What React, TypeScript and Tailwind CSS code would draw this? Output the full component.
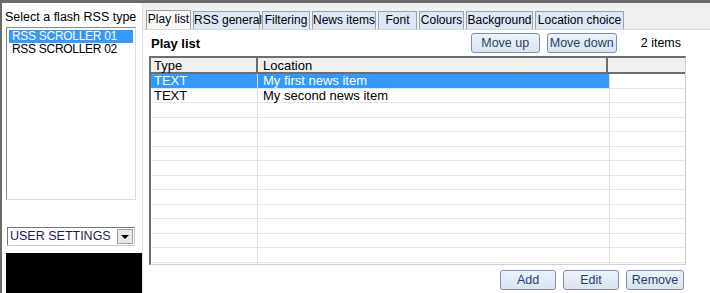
import React from "react";

const tabs = [
  { label: "Play list", w: "w-[45px]" },
  { label: "RSS general", w: "w-[67px]" },
  { label: "Filtering", w: "w-[48px]" },
  { label: "News items", w: "w-[64px]" },
  { label: "Font", w: "w-[39px]" },
  { label: "Colours", w: "w-[45px]" },
  { label: "Background", w: "w-[67px]" },
  { label: "Location choice", w: "w-[89px]" },
];

const rows = [
  { type: "TEXT", location: "My first news item" },
  { type: "TEXT", location: "My second news item" },
];

const WinButton = ({ label, className }: { label: string; className: string }) => (
  <button
    className={`h-[20px] rounded-[3px] border border-[#7d8fad] bg-gradient-to-b from-[#eef3fa] to-[#d9e4f2] text-[12.5px] text-[#27406b] whitespace-nowrap ${className}`}
  >
    {label}
  </button>
);

export default function App() {
  return (
    <div
      className="flex w-[710px] h-[293px] overflow-hidden bg-white border-t-[3px] border-l-2 border-[#6b6b6b] text-[12px] text-black"
      style={{ fontFamily: '"Liberation Sans", Arial, sans-serif' }}
    >
      {/* left column */}
      <div className="flex flex-col w-[141px] shrink-0 border-r border-[#e0e0e0]">
        <div className="pl-[3px] pt-[7px] h-[24px] leading-[14px] text-[12.5px] whitespace-nowrap">Select a flash RSS type</div>
        <div className="ml-[4px] w-[130px] h-[173px] border border-[#8a8a8a] border-r-[#dcdcdc] border-b-[#dcdcdc] p-[2px]">
          <div className="h-[13px] leading-[13px] bg-[#3399ff] text-white pl-[3px] text-[12px] tracking-[-0.3px]">RSS SCROLLER 01</div>
          <div className="h-[13px] leading-[13px] pl-[3px] text-[12px] tracking-[-0.3px]">RSS SCROLLER 02</div>
        </div>
        <div className="mt-[27px] ml-[5px] w-[128px] h-[19px] flex border border-[#7a7a7a] border-r-[#c8c8c8] border-b-[#c8c8c8]">
          <div className="flex-1 pl-[2px] leading-[17px] text-[#1a1a5a] text-[12.5px] whitespace-nowrap">USER SETTINGS</div>
          <div className="w-[16px] h-[15px] mt-[1px] mr-[1px] bg-[#e8e8e8] border border-[#a0a0a0] flex items-center justify-center">
            <div className="w-0 h-0 border-l-[4px] border-r-[4px] border-t-[4px] border-l-transparent border-r-transparent border-t-black" />
          </div>
        </div>
        <div className="mt-[7px] ml-[4px] flex-1 bg-black" />
      </div>

      {/* right column */}
      <div className="flex flex-col flex-1">
        <div className="h-[27px] bg-[#f0f0f0] flex items-end pl-[3px] gap-[2px] border-b border-[#d8d8d8]">
          {tabs.map((t, i) => (
            <div
              key={t.label}
              className={
                i === 0
                  ? `${t.w} shrink-0 h-[19px] text-center whitespace-nowrap leading-[17px] bg-[#f7f7f7] border border-b-0 border-[#a0a0a0] text-[12px]`
                  : `${t.w} shrink-0 h-[18px] text-center whitespace-nowrap leading-[16px] bg-[#dce7f5] border border-b-0 border-[#9aa4b0] text-[12px]`
              }
            >
              {t.label}
            </div>
          ))}
        </div>

        <div className="flex items-center h-[26px] pl-[8px] pr-[29px]">
          <div className="font-bold text-[13px] flex-1 pt-[2px]">Play list</div>
          <WinButton label="Move up" className="w-[69px]" />
          <WinButton label="Move down" className="w-[70px] ml-[7px]" />
          <div className="ml-[24px] text-[12.5px] whitespace-nowrap">2 items</div>
        </div>

        {/* grid */}
        <div className="ml-[6px] w-[537px] h-[209px] border-l-2 border-t-2 border-[#6e6e6e] border-r border-r-[#d0d0d0] border-b border-b-[#d0d0d0] overflow-hidden text-[13px]">
          <div className="flex h-[16px] bg-[#f0f0f0] border-b-2 border-[#6e6e6e]">
            <div className="w-[107px] pl-[3px] border-r-2 border-[#6e6e6e] leading-[15px]">Type</div>
            <div className="w-[350px] pl-[5px] border-r-2 border-[#6e6e6e] leading-[15px]">Location</div>
            <div className="flex-1" />
          </div>
          {Array.from({ length: 14 }).map((_, i) => {
            const r = rows[i];
            const sel = i === 0;
            return (
              <div key={i} className="flex h-[14.5px] border-b border-[#e6e6e6]">
                <div
                  className={`w-[107px] pl-[3px] border-r border-[#e0e0e0] leading-[14px] ${sel ? "bg-[#3399ff] text-white" : ""}`}
                >
                  {r ? r.type : ""}
                </div>
                <div
                  className={`w-[352px] pl-[5px] border-r border-[#e0e0e0] leading-[14px] ${sel ? "bg-[#3399ff] text-white" : ""}`}
                >
                  {r ? r.location : ""}
                </div>
                <div className="flex-1" />
              </div>
            );
          })}
        </div>

        <div className="flex justify-end gap-[7px] pr-[26px] mt-[5px]">
          <WinButton label="Add" className="w-[56px]" />
          <WinButton label="Edit" className="w-[56px]" />
          <WinButton label="Remove" className="w-[58px]" />
        </div>
      </div>
    </div>
  );
}
